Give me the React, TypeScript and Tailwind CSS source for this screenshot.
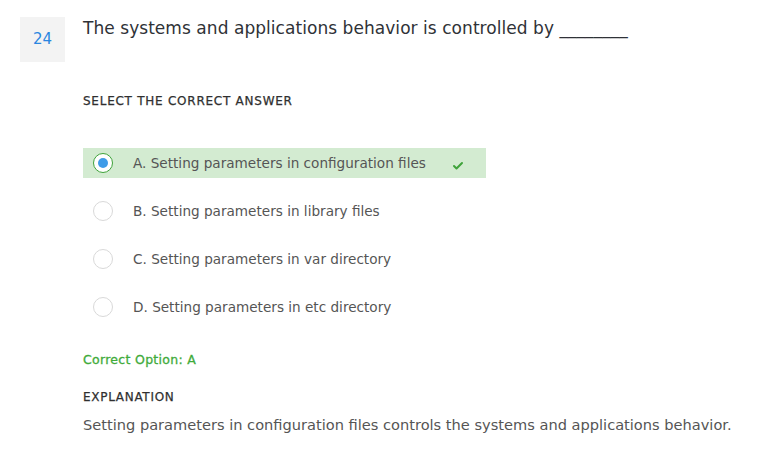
import { Check } from "lucide-react";

const options = [
  { key: "A", text: "Setting parameters in configuration files", picked: true },
  { key: "B", text: "Setting parameters in library files", picked: false },
  { key: "C", text: "Setting parameters in var directory", picked: false },
  { key: "D", text: "Setting parameters in etc directory", picked: false },
];

function Radio({ picked }: { picked: boolean }) {
  if (picked) {
    return (
      <span className="flex h-[20px] w-[20px] items-center justify-center rounded-full border border-[#3fa33a] bg-white">
        <span className="h-[10px] w-[10px] rounded-full bg-[#3f9ce8]" />
      </span>
    );
  }
  return <span className="block h-[20px] w-[20px] rounded-full border border-[#d9d9d9] bg-white" />;
}

export default function App() {
  return (
    <div
      className="h-[454px] w-[778px] bg-white text-[#333]"
      style={{ fontFamily: '"DejaVu Sans", "Liberation Sans", sans-serif' }}
    >
      <div className="flex pl-[20px] pt-[17px]">
        <div className="flex h-[45px] w-[45px] items-center justify-center bg-[#f3f3f3] text-[15px] text-[#2a86e0]">
          24
        </div>
        <div className="pl-[18px]">
          <h1 className="mt-0 text-[17px] leading-[22px] tracking-[0.05px] text-[#2f3237]">
            The systems and applications behavior is controlled by ________
          </h1>
        </div>
      </div>

      <div className="pl-[83px]">
        <div className="mt-[30px] text-[12px] tracking-[0.75px] text-[#2f2f2f] [-webkit-text-stroke:0.25px_#2f2f2f]">
          SELECT THE CORRECT ANSWER
        </div>

        <div className="mt-[38px] flex flex-col gap-[18px]">
          {options.map((o) => (
            <div
              key={o.key}
              className={
                "flex h-[30px] w-[403px] items-center pl-[10px] " + (o.picked ? "bg-[#d3ebd1]" : "")
              }
            >
              <Radio picked={o.picked} />
              <span className="ml-[20px] text-[13.6px] text-[#555]">
                {o.key}. {o.text}
              </span>
              {o.picked && <Check className="ml-[26px] mt-[6px] h-[12px] w-[12px] text-[#3fa33a]" strokeWidth={4} />}
            </div>
          ))}
        </div>

        <div className="mt-[29px] text-[12.5px] tracking-[0.3px] text-[#3fab3a] [-webkit-text-stroke:0.3px_#3fab3a]">
          Correct Option: A
        </div>
        <div className="mt-[18px] text-[12px] tracking-[0.7px] text-[#2f2f2f] [-webkit-text-stroke:0.25px_#2f2f2f]">
          EXPLANATION
        </div>
        <p className="mt-[8px] text-[14.6px] text-[#555]">
          Setting parameters in configuration files controls the systems and applications behavior.
        </p>
      </div>
    </div>
  );
}
